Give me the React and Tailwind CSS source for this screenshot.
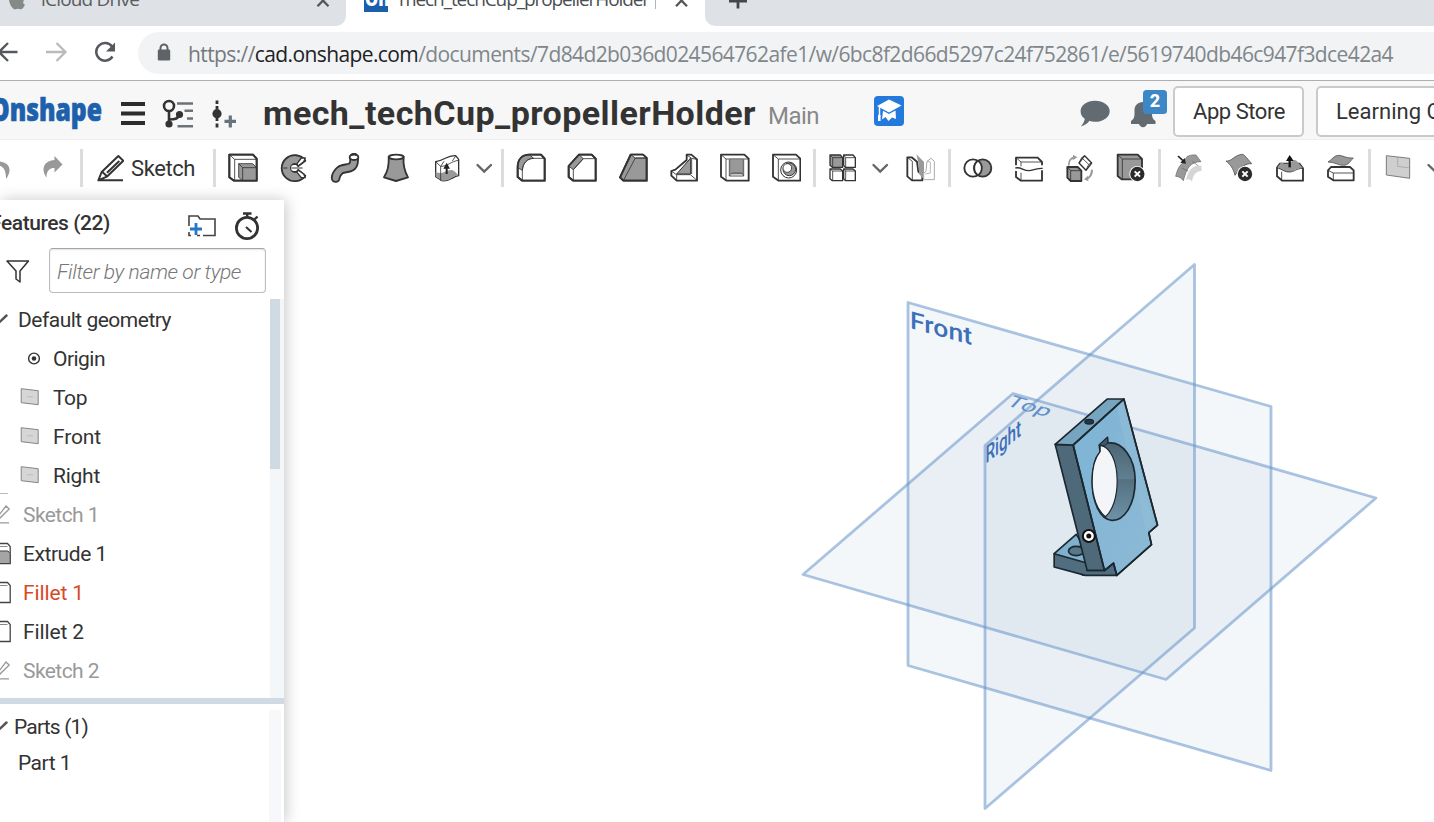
import { useLayoutEffect, useRef } from "react";

// Text run whose letter spacing is adjusted so that it fills a given width.
function Fit({ w, className = "", children }) {
  const ref = useRef(null);
  useLayoutEffect(() => {
    const el = ref.current;
    el.style.letterSpacing = "0px";
    const n = el.textContent.length;
    el.style.letterSpacing = `${(w - el.getBoundingClientRect().width) / n}px`;
  }, [w]);
  return (
    <span ref={ref} className={`inline-block shrink-0 whitespace-pre ${className}`}>
      {children}
    </span>
  );
}

const D = "#333333";
const G = "#999999";

// Toolbar button: 30px icon on a drawing grid of 90 units.
function Tool({ x, children }) {
  return (
    <div className="w-[51px] shrink-0 pl-[10px]">
      <svg width="30" height="30" viewBox={`${x} 39 90 90`} fill="none" stroke={D} strokeWidth="5.5" strokeLinejoin="round">
        {children}
      </svg>
    </div>
  );
}

function Sep() {
  return <div className="ml-px mr-[2px] h-[38px] w-[3px] shrink-0 bg-[#dcdcdc]" />;
}

function Chevron() {
  return (
    <svg className="mr-[5px] shrink-0" width="22" height="30" viewBox="0 0 22 30" fill="none" stroke="#666" strokeWidth="2.4" strokeLinecap="round">
      <path d="M4.500 12l6.700 6.500L18 12" />
    </svg>
  );
}

function Cross({ x, y }) {
  return (
    <g>
      <circle cx={x} cy={y} r="24" fill="#fff" stroke="none" />
      <circle cx={x} cy={y} r="21.5" fill="#2b2b2b" stroke="none" />
      <path d={`M${x - 8} ${y - 8}l16 16m0-16l-16 16`} stroke="#fff" strokeWidth="6" />
    </g>
  );
}

function BrowserChrome() {
  return (
    <div className="flex h-[81px] shrink-0 flex-col border-b border-[#aeaeae] bg-white font-['Open_Sans',sans-serif]">
      <div className="flex h-[26px] shrink-0 overflow-hidden bg-white">
        <div className="flex w-[346px] shrink-0 overflow-hidden rounded-br-[10px] bg-[#dee1e6]">
          <svg className="ml-[8px] shrink-0" width="18" height="26" viewBox="0 0 18 26" fill="#848a88">
            <path d="M1 0h15l-.5 1c-1 2 .3 3.200 1.500 3.600C16 7.500 14 9.800 12.500 9.300c-2-.9-3.500-.9-5 0C5.500 10 2 6 1 0z" />
          </svg>
          <Fit w={98} className="-mt-[13px] ml-[15px] text-[19px] leading-6 text-[#5a5d61]">iCloud Drive</Fit>
          <svg className="ml-auto mr-[15px] shrink-0" width="16" height="26" viewBox="0 0 16 26" stroke="#54575b" strokeWidth="2.300">
            <path d="M2.500 6.200L13.500-5M2.500-5l11 11.200" />
          </svg>
        </div>
        <div className="flex w-[359px] shrink-0 overflow-hidden">
          <svg className="ml-[18px] shrink-0" width="24" height="12" viewBox="0 0 24 12">
            <rect width="24" height="12" fill="#1b5eab" />
            <text x="1" y="5.500" fontFamily="Open Sans" fontWeight="800" fontSize="20" fill="#fff" textLength="34" lengthAdjust="spacingAndGlyphs">OnL</text>
          </svg>
          <Fit w={250} className="-mt-[13px] ml-[11px] text-[19px] leading-6 text-[#4b4e52]">mech_techCup_propellerHolder</Fit>
          <div className="ml-[6px] h-[9px] w-px shrink-0 bg-[#b5b5b5]" />
          <svg className="ml-[18px] shrink-0" width="16" height="26" viewBox="0 0 16 26" stroke="#54575b" strokeWidth="2.300">
            <path d="M2 6.200L13-5M2-5l11 11.200" />
          </svg>
        </div>
        <div className="flex flex-1 rounded-bl-[10px] bg-[#dee1e6]">
          <svg className="ml-[23px]" width="20" height="26" viewBox="0 0 20 26" stroke="#44474b" strokeWidth="2.800">
            <path d="M1 1.200h18M10-6V8.500" />
          </svg>
        </div>
      </div>
      <div className="flex h-[54px] items-center">
        <svg className="shrink-0" width="120" height="54" viewBox="0 26 120 54" fill="none">
          <path d="M17.500 52H-2M8 43l-9 9 9 9" stroke="#55585c" strokeWidth="2.300" />
          <path d="M46 52h19M56.500 43l9 9-9 9" stroke="#b9bbbd" strokeWidth="2.300" />
          <path d="M112 46.500A8.800 8.800 0 1 0 112.500 56.500" stroke="#55585c" strokeWidth="2.500" />
          <path d="M115 42.500v9h-9z" fill="#55585c" />
        </svg>
        <div className="ml-[18px] flex h-[42px] flex-1 items-center overflow-hidden rounded-l-full bg-[#f1f3f4]">
          <svg className="ml-[19px] shrink-0" width="14" height="20" viewBox="0 0 14 20">
            <path d="M3.500 8V5a3.500 3.500 0 0 1 7 0v3" fill="none" stroke="#5f6368" strokeWidth="2" />
            <rect x=".8" y="6.500" width="12.400" height="11" rx="1.200" fill="#5f6368" />
          </svg>
          <Fit w={1205} className="ml-[17px] mt-[2px] text-[21px] leading-7 text-[#80868b]">
            <span className="text-[#75797d]">https://</span><span className="text-[#202124]">cad.onshape.com</span>/documents/7d84d2b036d024564762afe1/w/6bc8f2d66d5297c24f752861/e/5619740db46c947f3dce42a4
          </Fit>
        </div>
      </div>
    </div>
  );
}

function Header() {
  return (
    <header className="flex h-[59px] shrink-0 items-center overflow-hidden border-b border-[#eeeeee] bg-[#f7f7f7]">
      <svg className="shrink-0" width="263" height="58" viewBox="0 81 263 58" fill="none">
        <text x="-10" y="121" fontFamily="Open Sans" fontWeight="800" fontSize="31" fill="#1d60ac" stroke="#1d60ac" strokeWidth=".7" textLength="112" lengthAdjust="spacingAndGlyphs">Onshape</text>
        <path d="M121 104h24M121 113.500h24M121 123h24" stroke="#2c2c2c" strokeWidth="4" />
        <g stroke="#333" strokeWidth="2.600">
          <circle cx="169" cy="106" r="5" />
          <path d="M169 111v13M169 119.500c7 0 9-1 10.500-5" />
          <circle cx="169" cy="124" r="2.300" fill="#333" />
          <circle cx="179.500" cy="114.500" r="2.300" fill="#333" />
        </g>
        <path d="M177 103.500h16M184.500 110.800h8.500M187 118.500h6M177.500 126.300h15.500" stroke="#6b7379" strokeWidth="2.500" />
        <path d="M217 100.500v3.500M217 106v3M217 118v3M217 123.500v4" stroke="#333" strokeWidth="2.800" />
        <circle cx="217" cy="113.700" r="4.600" fill="#333" />
        <path d="M224.500 121.300H236M230.300 115.500V127.500" stroke="#68737c" strokeWidth="3.200" />
      </svg>
      <Fit w={493} className="mt-[6px] font-['Roboto',sans-serif] text-[34px] font-bold leading-10 text-[#333]">mech_techCup_propellerHolder</Fit>
      <Fit w={51} className="ml-[12px] mt-[12px] font-['Roboto',sans-serif] text-[24px] leading-8 text-[#888]">Main</Fit>
      <svg className="ml-[55px] shrink-0" width="30" height="58" viewBox="874 81 30 58">
        <rect x="874" y="96" width="30" height="30" rx="4" fill="#2379dc" />
        <path d="M889 99.500l12.500 6-12.500 7-12-6.500z" fill="#fff" />
        <path d="M883 110.800l6 3.300 6.500-3.500.5 8.400-4-1.500-3.500 3.500-3-4-3.500 2.500z" fill="#fff" />
        <path d="M879.500 107v9" stroke="#fff" strokeWidth="1.500" />
        <path d="M878 115h2.600v6H878z" fill="#fff" />
      </svg>
      <svg className="ml-[176px] shrink-0" width="90" height="58" viewBox="1080 81 90 58">
        <path d="M1095 100.700c8 0 14.700 4.500 14.700 10.500s-6.700 10.600-14.200 10.600c-2.500 0-4.500-.3-6-1-2 2.800-5 4.800-8.700 5.700 2-2 3.500-4.500 4-7.700-2.800-2-4.200-4.500-4.200-7.600 0-6 6.400-10.500 14.400-10.500z" fill="#616b71" />
        <path d="M1131 124v-3c2.500-1.500 3.500-3.500 3.500-7v-4c0-4 3-8 8.500-8s9 4 9 8v4c0 3.500 1 5.500 3.500 7v3h-8.500c-.5 2-2 3.200-4 3.200s-3.400-1.200-4-3.200z" fill="#616b71" />
        <rect x="1143" y="90" width="24" height="24" rx="3.500" fill="#3e87c6" />
        <text x="1155" y="107" textAnchor="middle" fontFamily="Roboto" fontWeight="800" fontSize="18" fill="#fff">2</text>
      </svg>
      <div className="ml-[3px] mt-[3px] flex h-[51px] w-[131px] shrink-0 items-center rounded-[5px] border-2 border-[#cacaca] bg-white pl-[18px] pt-px">
        <Fit w={92} className="font-['Roboto',sans-serif] text-[22px] leading-7 text-[#333]">App Store</Fit>
      </div>
      <div className="ml-[12px] mt-[3px] flex h-[51px] w-[180px] shrink-0 items-center rounded-[5px] border-2 border-[#cacaca] bg-white pl-[18px] pt-px">
        <Fit w={155} className="font-['Roboto',sans-serif] text-[22px] leading-7 text-[#333]">Learning Center</Fit>
      </div>
    </header>
  );
}

function Toolbar() {
  return (
    <div className="flex h-[60px] shrink-0 items-center overflow-hidden bg-white pb-[4px]">
      <svg className="shrink-0" width="79" height="38" viewBox="0 149 79 38" fill={G}>
        <path d="M-6 158v-3l-6 8 6 7v-5c8-.5 12 3 12 14 7-10 4-18-12-18z" />
        <path d="M54.500 156l8 8.500-8 8v-4.500c-5 0-8 2.500-8 9.500-5.500-8-3.500-16.500 8-17.500z" />
      </svg>
      <Sep />
      <svg className="ml-[12px] shrink-0" width="27" height="30" viewBox="288 39 81 90" fill="none" stroke={D} strokeWidth="6" strokeLinejoin="round">
        <path d="M292 121l10-25 50-48 15 14-48 47zM292 121h74M305 97l12 11M318 98l37-35" />
      </svg>
      <Fit w={64} className="ml-[7px] mr-[17px] font-['Roboto',sans-serif] text-[22px] leading-7 text-[#333] mt-[2px]">Sketch</Fit>
      <Sep />
      <Tool x={684}>
        <path d="M688 44h71l11 12v66h-68l-14-10z" fill="#fff" />
        <path d="M688 44l16 14v64M704 58h66" strokeWidth="2.500" />
        <path d="M716 71h42l12 12v39h-42l-12-10z" fill={G} strokeWidth="2.500" />
        <path d="M716 71l12 12h42M728 83v39" strokeWidth="2.500" />
        <path d="M688 44h71l11 12v66h-68l-14-10z" />
      </Tool>
      <Tool x={837}>
        <path d="M916 62A39 39 0 1 0 916 107L895 90A12 12 0 1 1 895 78z" fill={G} />
        <path d="M916 54l-5 11-17 13-3-7 13-17zM916 113l-5-11-17-12-3 7 13 16z" fill="#fff" strokeWidth="4" />
        <circle cx="882" cy="84" r="9" fill="#fff" stroke="none" />
        <path d="M850 84h12m12 0h34" strokeWidth="3" />
      </Tool>
      <Tool x={30}>
        <path d="M102 53c4 42-28 26-42 38-10 9-13 16-13 23" stroke={D} strokeWidth="29" strokeLinecap="round" />
        <path d="M102 53c4 42-28 26-42 38-10 9-13 16-13 23" stroke={G} strokeWidth="18" strokeLinecap="round" />
        <ellipse cx="102" cy="52" rx="13" ry="8" fill="#fff" />
      </Tool>
      <Tool x={183}>
        <path d="M206 50c2 28-5 48-14 62l36 11 36-11c-8-14-16-34-13-62z" fill={G} />
        <ellipse cx="228.500" cy="51" rx="22" ry="7" fill="#fff" />
      </Tool>
      <Tool x={336}>
        <path d="M347 65c25-3 35-20 60-18l9 11v49c-18 1-25 18-50 15l-19-12z" fill="#fff" strokeWidth="4" />
        <path d="M347 97c25 8 30-8 48-7 10 2 12 10 21 15-18 2-25 20-50 17l-19-12z" fill={G} stroke="none" />
        <path d="M347 65l15 14v43M362 79c22 0 30-15 54-18M362 79l10-15M397 63l10-15" strokeWidth="2.500" />
        <path d="M380 102V82" stroke="#222" strokeWidth="6" />
        <path d="M370 86l10-18 10 18z" fill="#222" stroke="none" />
      </Tool>
      <Chevron />
      <Sep />
      <Tool x={588}>
        <path d="M593 83c0-25 13-39 35-39h35l11 12v66h-67l-14-11z" fill="#fff" />
        <path d="M593 83c1-24 12-37 35-39l13 11c-20 1-32 14-34 36z" fill={G} strokeWidth="2.500" />
        <path d="M607 122V91c2-22 14-36 34-36h31" strokeWidth="2.500" />
        <path d="M593 83c0-25 13-39 35-39h35l11 12v66h-67l-14-11z" />
      </Tool>
      <Tool x={741}>
        <path d="M746 78l31-34h38l12 12v66h-67l-14-11z" fill="#fff" />
        <path d="M746 78l31-34 13 12-30 33z" fill={G} strokeWidth="2.500" />
        <path d="M760 122V89l30-33h37M815 44l12 12" strokeWidth="2.500" />
        <path d="M746 78l31-34h38l12 12v66h-67l-14-11z" />
      </Tool>
      <Tool x={894}>
        <path d="M900 112l32-68h37l11 10v68h-70z" fill={G} />
        <path d="M932 44l14 10h34l-11-10z" fill="#fff" strokeWidth="2.500" />
        <path d="M910 122l36-68h34" strokeWidth="2.500" />
        <path d="M900 112l32-68h37l11 10v68h-70z" />
      </Tool>
      <Tool x={27}>
        <path d="M34 93l12-4 34-29V44h14l17 14v64H50L34 107z" fill="#fff" />
        <path d="M50 102l42-48v48z" fill={G} strokeWidth="3" />
        <path d="M34 93l15 11h42l20 17M50 103v19M80 45l15 10 15 3M95 56v46" strokeWidth="2.500" />
      </Tool>
      <Tool x={180}>
        <path d="M183 44h70l13 12v66h-66l-17-12z" fill="#fff" />
        <path d="M183 44l15 13h68M198 57v65M208 58v50h43V58" strokeWidth="2.500" />
        <path d="M211 57h37v45h-37z" fill={G} stroke="#666" strokeWidth="2" />
        <path d="M208 108l9-9h28l6 9" strokeWidth="2" />
      </Tool>
      <Tool x={333}>
        <path d="M339 44h69l13 12v66h-65l-17-12z" fill="#fff" />
        <path d="M339 44l16 13h66M355 57v65" strokeWidth="2.500" />
        <circle cx="386" cy="90" r="24" fill="#fff" strokeWidth="3" />
        <circle cx="388" cy="88" r="19" fill={G} strokeWidth="3" />
        <circle cx="382" cy="84" r="13" fill="#fff" strokeWidth="2.500" />
      </Tool>
      <Sep />
      <Tool x={504}>
        <path d="M510 45h31l7 8v29h-31l-7-6z" fill={G} strokeWidth="4" />
        <path d="M551 45h28l7 8v29h-30l-5-6zM510 87h31l7 6v29h-31l-7-6zM551 87h28l7 6v29h-30l-5-6z" fill="#fff" strokeWidth="4" />
        <path d="M510 45l8 8h30M518 53v29M551 45l6 8h29M557 53v29M510 87l8 6h30M518 93v29M551 87l6 6h29M557 93v29" strokeWidth="2.500" />
      </Tool>
      <Chevron />
      <Tool x={738}>
        <path d="M742 52h13l16 13 4 30 12 9v17h-31l-14-12z" fill="#fff" />
        <path d="M742 52l15 12v57" strokeWidth="2.500" />
        <path d="M769 43l23 23v53l-15-18-2-34z" fill={G} stroke="none" />
        <path d="M823 119V64l-10-9-12 9-3 30-7 6v19z" fill="#fff" stroke="#aaa" strokeWidth="3" />
        <path d="M801 64l10 2v33l-15 3" stroke="#aaa" strokeWidth="2.500" />
      </Tool>
      <Sep />
      <Tool x={909}>
        <circle cx="939" cy="84" r="26" fill="#fff" />
        <circle cx="968" cy="84" r="26" fill={G} />
        <path d="M954 62.500a26 26 0 0 1 0 43 26 26 0 0 1 0-43z" fill="#fff" />
      </Tool>
      <Tool x={1062}>
        <path d="M1068 76V53h65l13 13v14c-18 0-20 9-38 9-20 0-25-12-40-13z" fill="#fff" stroke="none" />
        <path d="M1068 76V53h65l13 13v10M1068 93v18l15 11h63V91" />
        <path d="M1068 53l15 13h63M1083 66v13M1083 98v24" strokeWidth="2.500" />
        <path d="M1066 84c17-5 23 9 42 8 16-1 22-8 40-7" strokeWidth="4" />
      </Tool>
      <Tool x={75}>
        <path d="M82 81h31l11 11v31H92l-10-10z" fill={G} />
        <path d="M82 81l10 11h32M92 92v31" strokeWidth="2.500" />
        <path d="M117 69l17-22 21 22-17 22z" fill="#fff" strokeWidth="4" />
        <path d="M117 69l8-16 21 20 9-4M125 53l9-6M146 73l-8 18" strokeWidth="2.500" />
        <path d="M84 77c0-15 6-24 15-27v-6l13 8-14 9v-5c-7 4-9 11-9 20zM159 89c0 14-5 23-14 28v7l-13-6 12-11v4c6-5 8-12 9-22z" fill={G} stroke="none" />
      </Tool>
      <Tool x={228}>
        <path d="M233 44h60l13 13v61h-61l-12-10z" fill={G} />
        <path d="M233 44l14 13h59M247 57v61" strokeWidth="2.500" />
        <Cross x={292} y={102} />
      </Tool>
      <Sep />
      <Tool x={399}>
        <path d="M484 77c-28-2-39 14-46 45 8-9 13-3 18 3 3-19 9-30 29-33z" fill="#d5d5d5" stroke="none" />
        <path d="M441 50c8-5 18-6 27-5l15 20c-31 0-43 18-53 57-7-9-12-12-23-13 5-21 11-32 23-42z" fill={G} strokeWidth="2" stroke="#666" />
        <path d="M425 84l20 9M457 64l17 13" stroke="#666" strokeWidth="2" />
        <path d="M413 47l18 17" stroke="#fff" strokeWidth="11" />
        <path d="M414 48l18 17" stroke="#222" strokeWidth="5" />
        <path d="M438 71l-17-3 13-14z" fill="#222" stroke="none" />
      </Tool>
      <Tool x={552}>
        <path d="M558 63c16 3 25-18 48-20 7 0 11 7 29 28-19-1-34 10-50 35-6-23-14-32-27-43z" fill={G} strokeWidth="2.500" stroke="#555" />
        <Cross x={615} y={102} />
      </Tool>
      <Tool x={705}>
        <path d="M711 83l9-12h58l11 14v37h-62l-16-13z" fill="#fff" />
        <path d="M711 83l13-16c12 8 22 5 34-5 10-7 15 5 30 22-22-1-28 12-40 12-12 1-22-8-37-13z" fill={G} stroke="none" />
        <path d="M711 83c18 6 24 14 38 13 13 0 20-11 40-11M725 95v26" strokeWidth="2.500" />
        <path d="M749 82V57" stroke="#111" strokeWidth="7" />
        <path d="M738 63l11-18 12 18z" fill="#111" stroke="none" />
      </Tool>
      <Tool x={858}>
        <path d="M864 91l9-10h57l11 10v30h-61l-16-11z" fill="#fff" />
        <path d="M864 91l16 8h61M880 99v22" strokeWidth="2.500" />
        <path d="M864 66c10-4 16-19 31-20 14 0 21 9 45 8-10 10-15 22-30 22-16 0-25-10-46-10z" fill={G} stroke="#555" strokeWidth="2.500" />
      </Tool>
      <Sep />
      <Tool x={1029}>
        <path d="M1039 47l70 8v60l-70-10z" fill="#cfcfcf" stroke="#666" strokeWidth="2.500" />
        <path d="M1073 51v28l36 5" stroke="#999" strokeWidth="2" />
      </Tool>
      <Chevron />
    </div>
  );
}

function PlaneIcon() {
  return (
    <svg className="mr-[14px] shrink-0" width="19" height="19" viewBox="0 0 19 19">
      <path d="M1.200 .7l17 2v14l-17-2z" fill="#d6d6d6" stroke="#858585" strokeWidth="1" />
      <path d="M7 8.800h6" stroke="#bbb" />
    </svg>
  );
}

function Row({ icon, pad, label, w, color = "text-[#333]" }) {
  return (
    <div className={`flex h-[39px] items-center ${pad}`}>
      {icon}
      <Fit w={w} className={`text-[21px] leading-7 ${color}`}>{label}</Fit>
    </div>
  );
}

const cutIcon = "mr-[12px] shrink-0";

function PencilCut() {
  return (
    <svg className={cutIcon} width="11" height="24" viewBox="0 0 11 24" fill="none" stroke="#999" strokeWidth="1.300">
      <path d="M-4 16L6 3l3.200 3L-1 16M0 19.800h9" />
    </svg>
  );
}

function BoxCut({ filled }) {
  return (
    <svg className={cutIcon} width="11" height="24" viewBox="0 0 11 24" stroke="#444" strokeWidth="1.300">
      <path d="M-6 1.500H7.500l2.700 3v17H-6z" fill="#fff" />
      {filled && <path d="M-6 9H8l2.200 2.500v10H-6z" fill="#a5a5a5" strokeWidth="1" />}
      <path d="M-6 4.500H7.500" stroke="#888" strokeWidth="1" />
    </svg>
  );
}

function Check() {
  return (
    <svg className="shrink-0" width="10" height="16" viewBox="0 0 10 16" stroke="#555" strokeWidth="2.500" strokeLinecap="round">
      <path d="M-2 11.500L6.500 3.500" />
    </svg>
  );
}

function Sidebar() {
  return (
    <aside className="z-10 flex w-[284px] shrink-0 flex-col overflow-hidden bg-white font-['Roboto',sans-serif] shadow-[2px_0_14px_rgba(0,0,0,0.22)]">
      <div className="flex h-[47px] shrink-0 items-center">
        <Fit w={120} className="-ml-[10px] -mt-[2px] text-[21px] font-medium leading-7 text-[#333]">Features (22)</Fit>
        <svg className="ml-[78px] mt-[4px] shrink-0" width="28" height="24" viewBox="188 214 28 24" fill="none" stroke="#444" strokeWidth="1.600">
          <path d="M189 226v-10h9l2 3h15v16.500h-12M189 232v3.500h2M197 235.500h3" />
          <path d="M190 229h12M196 223v12" stroke="#2277c8" strokeWidth="2.800" />
        </svg>
        <svg className="ml-[18px] mt-[4px] shrink-0" width="26" height="28" viewBox="234 212 26 28" fill="none" stroke="#333" strokeWidth="2.800">
          <circle cx="247" cy="228" r="10.600" />
          <path d="M243 213.500h8.500M247.200 213.500v4M254.500 219.500l3-3" strokeWidth="2.400" />
          <path d="M246 227l5.500 5" strokeWidth="2" />
        </svg>
      </div>
      <div className="flex h-[50px] shrink-0 items-center pb-[3px]">
        <svg className="ml-[6px] shrink-0" width="24" height="26" viewBox="6 258 24 26" fill="none" stroke="#333" strokeWidth="1.500" strokeLinejoin="round">
          <path d="M7 261h21.500l-8.500 10v11l-4-3v-8z" />
        </svg>
        <div className="ml-[19px] flex h-[45px] w-[217px] items-center rounded-[4px] border border-[#bdbdbd] border-t-[#a5a5a5] pl-[7px] pt-[2px] shadow-[inset_0_1px_2px_rgba(0,0,0,0.12)]">
          <Fit w={184} className="text-[21px] font-light italic leading-7 text-[#777]">Filter by name or type</Fit>
        </div>
      </div>
      <div className="flex h-[401px] shrink-0">
        <div className="flex-1 pt-[3px]">
          <Row pad="" icon={<span className="mr-[8px]"><Check /></span>} label="Default geometry" w={153} />
          <Row
            pad="pl-[27px]"
            icon={
              <svg className="mr-[12px] shrink-0" width="14" height="16" viewBox="0 0 14 16">
                <circle cx="7" cy="7.500" r="5.400" fill="none" stroke="#333" strokeWidth="1.400" />
                <circle cx="7" cy="7.500" r="2.300" fill="#333" />
              </svg>
            }
            label="Origin"
            w={52}
          />
          <Row pad="pl-[20px]" icon={<PlaneIcon />} label="Top" w={34} />
          <Row pad="pl-[20px]" icon={<PlaneIcon />} label="Front" w={48} />
          <Row pad="pl-[20px]" icon={<PlaneIcon />} label="Right" w={47} />
          <div className="-mt-[2px] mb-px h-px w-[8px] bg-[#bbb]" />
          <Row pad="" icon={<PencilCut />} label="Sketch 1" w={76} color="text-[#999]" />
          <Row pad="" icon={<BoxCut filled />} label="Extrude 1" w={84} />
          <Row pad="" icon={<BoxCut />} label="Fillet 1" w={61} color="text-[#d64b26]" />
          <Row pad="" icon={<BoxCut />} label="Fillet 2" w={61} />
          <Row pad="" icon={<PencilCut />} label="Sketch 2" w={76} color="text-[#999]" />
        </div>
        <div className="mt-[2px] w-[14px] bg-[#f4f7fa]">
          <div className="h-[170px] w-[10px] bg-[#cfdae3]" />
        </div>
      </div>
      <div className="h-[6px] shrink-0 bg-[#cfdae4]" />
      <div className="flex flex-1">
        <div className="flex-1">
          <div className="flex h-[45px] items-center">
            <span className="mr-[4px]"><Check /></span>
            <Fit w={74} className="text-[21px] leading-7 text-[#333]">Parts (1)</Fit>
          </div>
          <div className="flex h-[27px] items-center pl-[18px]">
            <Fit w={53} className="text-[21px] leading-7 text-[#333]">Part 1</Fit>
          </div>
        </div>
        <div className="mr-[3px] mt-[6px] w-[12px] bg-[#f7f8f9]" />
      </div>
    </aside>
  );
}

function Viewport() {
  return (
    <main className="flex-1 bg-white">
      <svg width="1150" height="622" viewBox="284 200 1150 622" fill="none">
        <defs>
          <linearGradient id="bore" x1="0" y1="0" x2="0" y2="1">
            <stop offset="0" stopColor="#49616f" />
            <stop offset=".5" stopColor="#617f91" />
            <stop offset=".51" stopColor="#55707f" />
            <stop offset="1" stopColor="#6d93a9" />
          </linearGradient>
          <linearGradient id="face" x1="0" y1="0" x2="1" y2="1">
            <stop offset="0" stopColor="#7db3d4" />
            <stop offset="1" stopColor="#8dbad6" />
          </linearGradient>
        </defs>
        <g fill="rgba(125,158,192,0.085)" stroke="rgba(105,150,202,0.56)" strokeWidth="2.800" strokeLinejoin="round">
          <path d="M908 302.500L1271 406.500V770.500L908 665.500z" />
          <path d="M1013 393.500L1376 498L1166 679.500L803 574.500z" />
          <path d="M985 445.500L1194.500 264.500V628L985 808.500z" />
        </g>
        <g fontFamily="Roboto" fontSize="24" fill="#3d70bb">
          <text transform="matrix(1 .275 0 1 910 328)" fontWeight="500" textLength="62" lengthAdjust="spacingAndGlyphs">Front</text>
          <text transform="matrix(1 .285 -.53 .58 1004.500 405)" textLength="42" lengthAdjust="spacingAndGlyphs" fill="#5f8fca">Top</text>
          <text transform="matrix(.66 -.53 0 1 985.500 464)" fontWeight="500" textLength="54" lengthAdjust="spacingAndGlyphs">Right</text>
        </g>
        <g transform="translate(1029.500 379.700) scale(.33333)" stroke="#1c2830" strokeWidth="5" strokeLinejoin="round">
          <path d="M74 522l66-58 60 90-40 32z" fill="#7fb0cc" />
          <ellipse cx="140" cy="514" rx="23" ry="14" fill="#57788b" />
          <path d="M74 522l98 28v22h54l26-22 10 37H168L74 562z" fill="#506e80" />
          <path d="M77 194l54 2 94 376h-52z" fill="#4d697a" />
          <path d="M77 194L233 58h50L131 196z" fill="#77a5c0" />
          <path d="M131 196L283 58l101 378-26 23 8 36-104 92-10-37-27 22z" fill="url(#face)" />
          <path d="M283 60l90 375-24 18L262 80z" fill="#92bdd7" stroke="none" opacity=".55" />
          <path d="M209 196l25-23 1 17c43-7 82 45 82 112 0 78-36 122-70 120-36-3-59-56-59-117 0-40 10-73 24-89z" fill="url(#bore)" />
          <path d="M212 197c30 3 51 49 51 107 0 49-14 89-35 107-24-18-40-59-40-106 0-40 10-73 24-89z" fill="#f4f5f8" strokeWidth="3.500" />
          <path d="M209 196l25-23 1 17-10 8z" fill="#3f5968" strokeWidth="3" />
          <path d="M131 196L283 58l101 378-26 23 8 36-104 92-10-37-27 22z" />
          <ellipse cx="179" cy="126" rx="13" ry="7" fill="#243640" strokeWidth="4" />
          <circle cx="178" cy="469" r="18" fill="#fff" stroke="#111" strokeWidth="6" />
          <circle cx="178" cy="469" r="7.500" fill="#111" stroke="none" />
        </g>
      </svg>
    </main>
  );
}

export default function App() {
  return (
    <div className="flex h-[822px] w-[1434px] flex-col overflow-hidden bg-white">
      <BrowserChrome />
      <Header />
      <Toolbar />
      <div className="flex flex-1">
        <Sidebar />
        <Viewport />
      </div>
    </div>
  );
}
